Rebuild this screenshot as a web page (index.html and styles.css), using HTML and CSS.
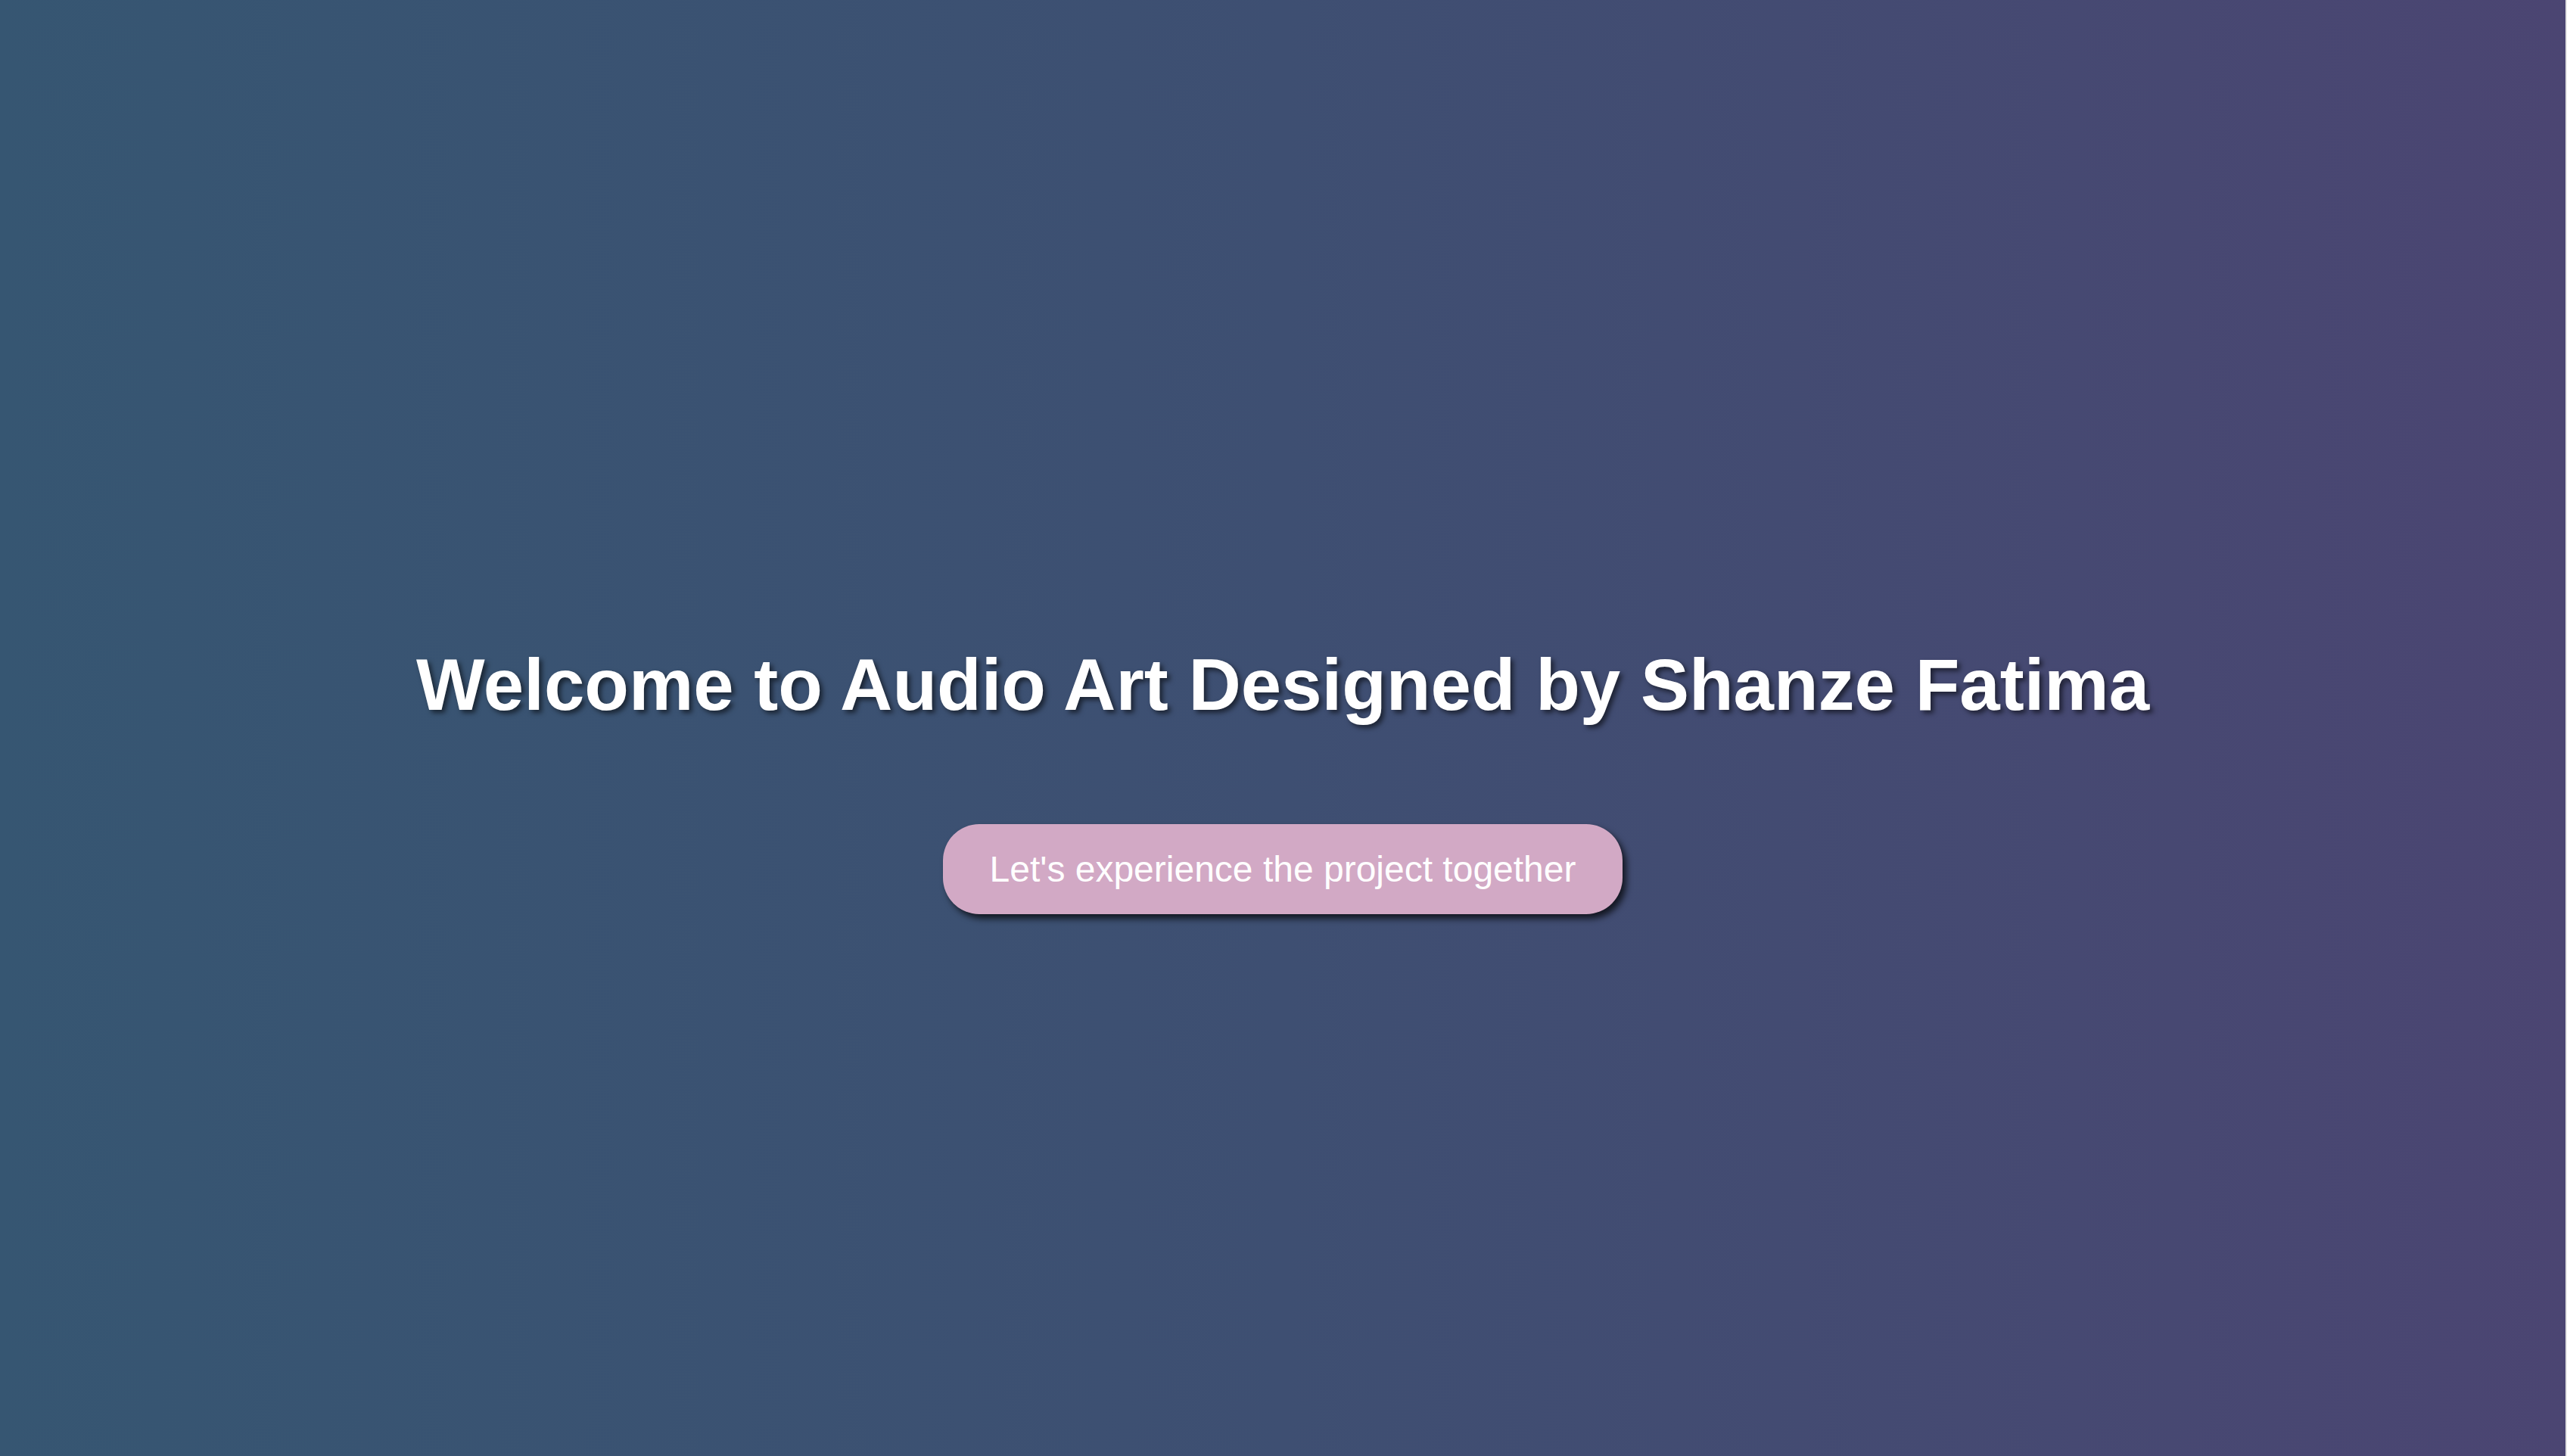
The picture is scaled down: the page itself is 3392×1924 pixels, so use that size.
FILE: index.html
```html
<!DOCTYPE html>
<html lang="en">
<head>
<meta charset="utf-8">
<title>Audio Art</title>
<link rel="stylesheet" href="styles.css">
</head>
<body>
<main class="hero">
  <h1 class="hero-title">Welcome to Audio Art Designed by Shanze Fatima</h1>
  <button class="hero-button" type="button">Let's experience the project together</button>
</main>
</body>
</html>
```
FILE: styles.css
```css
html, body {
  margin: 0;
  padding: 0;
  height: 100%;
}

body {
  background: linear-gradient(to right, #365672 0%, #3e4f72 50%, #4b4572 100%);
  font-family: "Liberation Sans", Arial, sans-serif;
  color: #ffffff;
  overflow: hidden;
  border-right: 2px solid #e4e4e4;
  box-sizing: border-box;
}

.hero {
  box-sizing: border-box;
  min-height: 100vh;
  display: flex;
  flex-direction: column;
  align-items: center;
  justify-content: center;
  padding-top: 134px;
}

.hero-title {
  margin: 0 0 129px;
  font-size: 96px;
  font-weight: 700;
  line-height: 110px;
  text-align: center;
  text-shadow: 4px 4px 6px rgba(0, 0, 0, 0.55);
}

.hero-button {
  font-family: "Liberation Sans", Arial, sans-serif;
  font-size: 48px;
  line-height: 55px;
  color: #ffffff;
  background: #d2a9c5;
  border: none;
  border-radius: 48px;
  padding: 32px 62px;
  box-shadow: 5px 6px 9px rgba(0, 0, 0, 0.7);
  cursor: pointer;
}
```
